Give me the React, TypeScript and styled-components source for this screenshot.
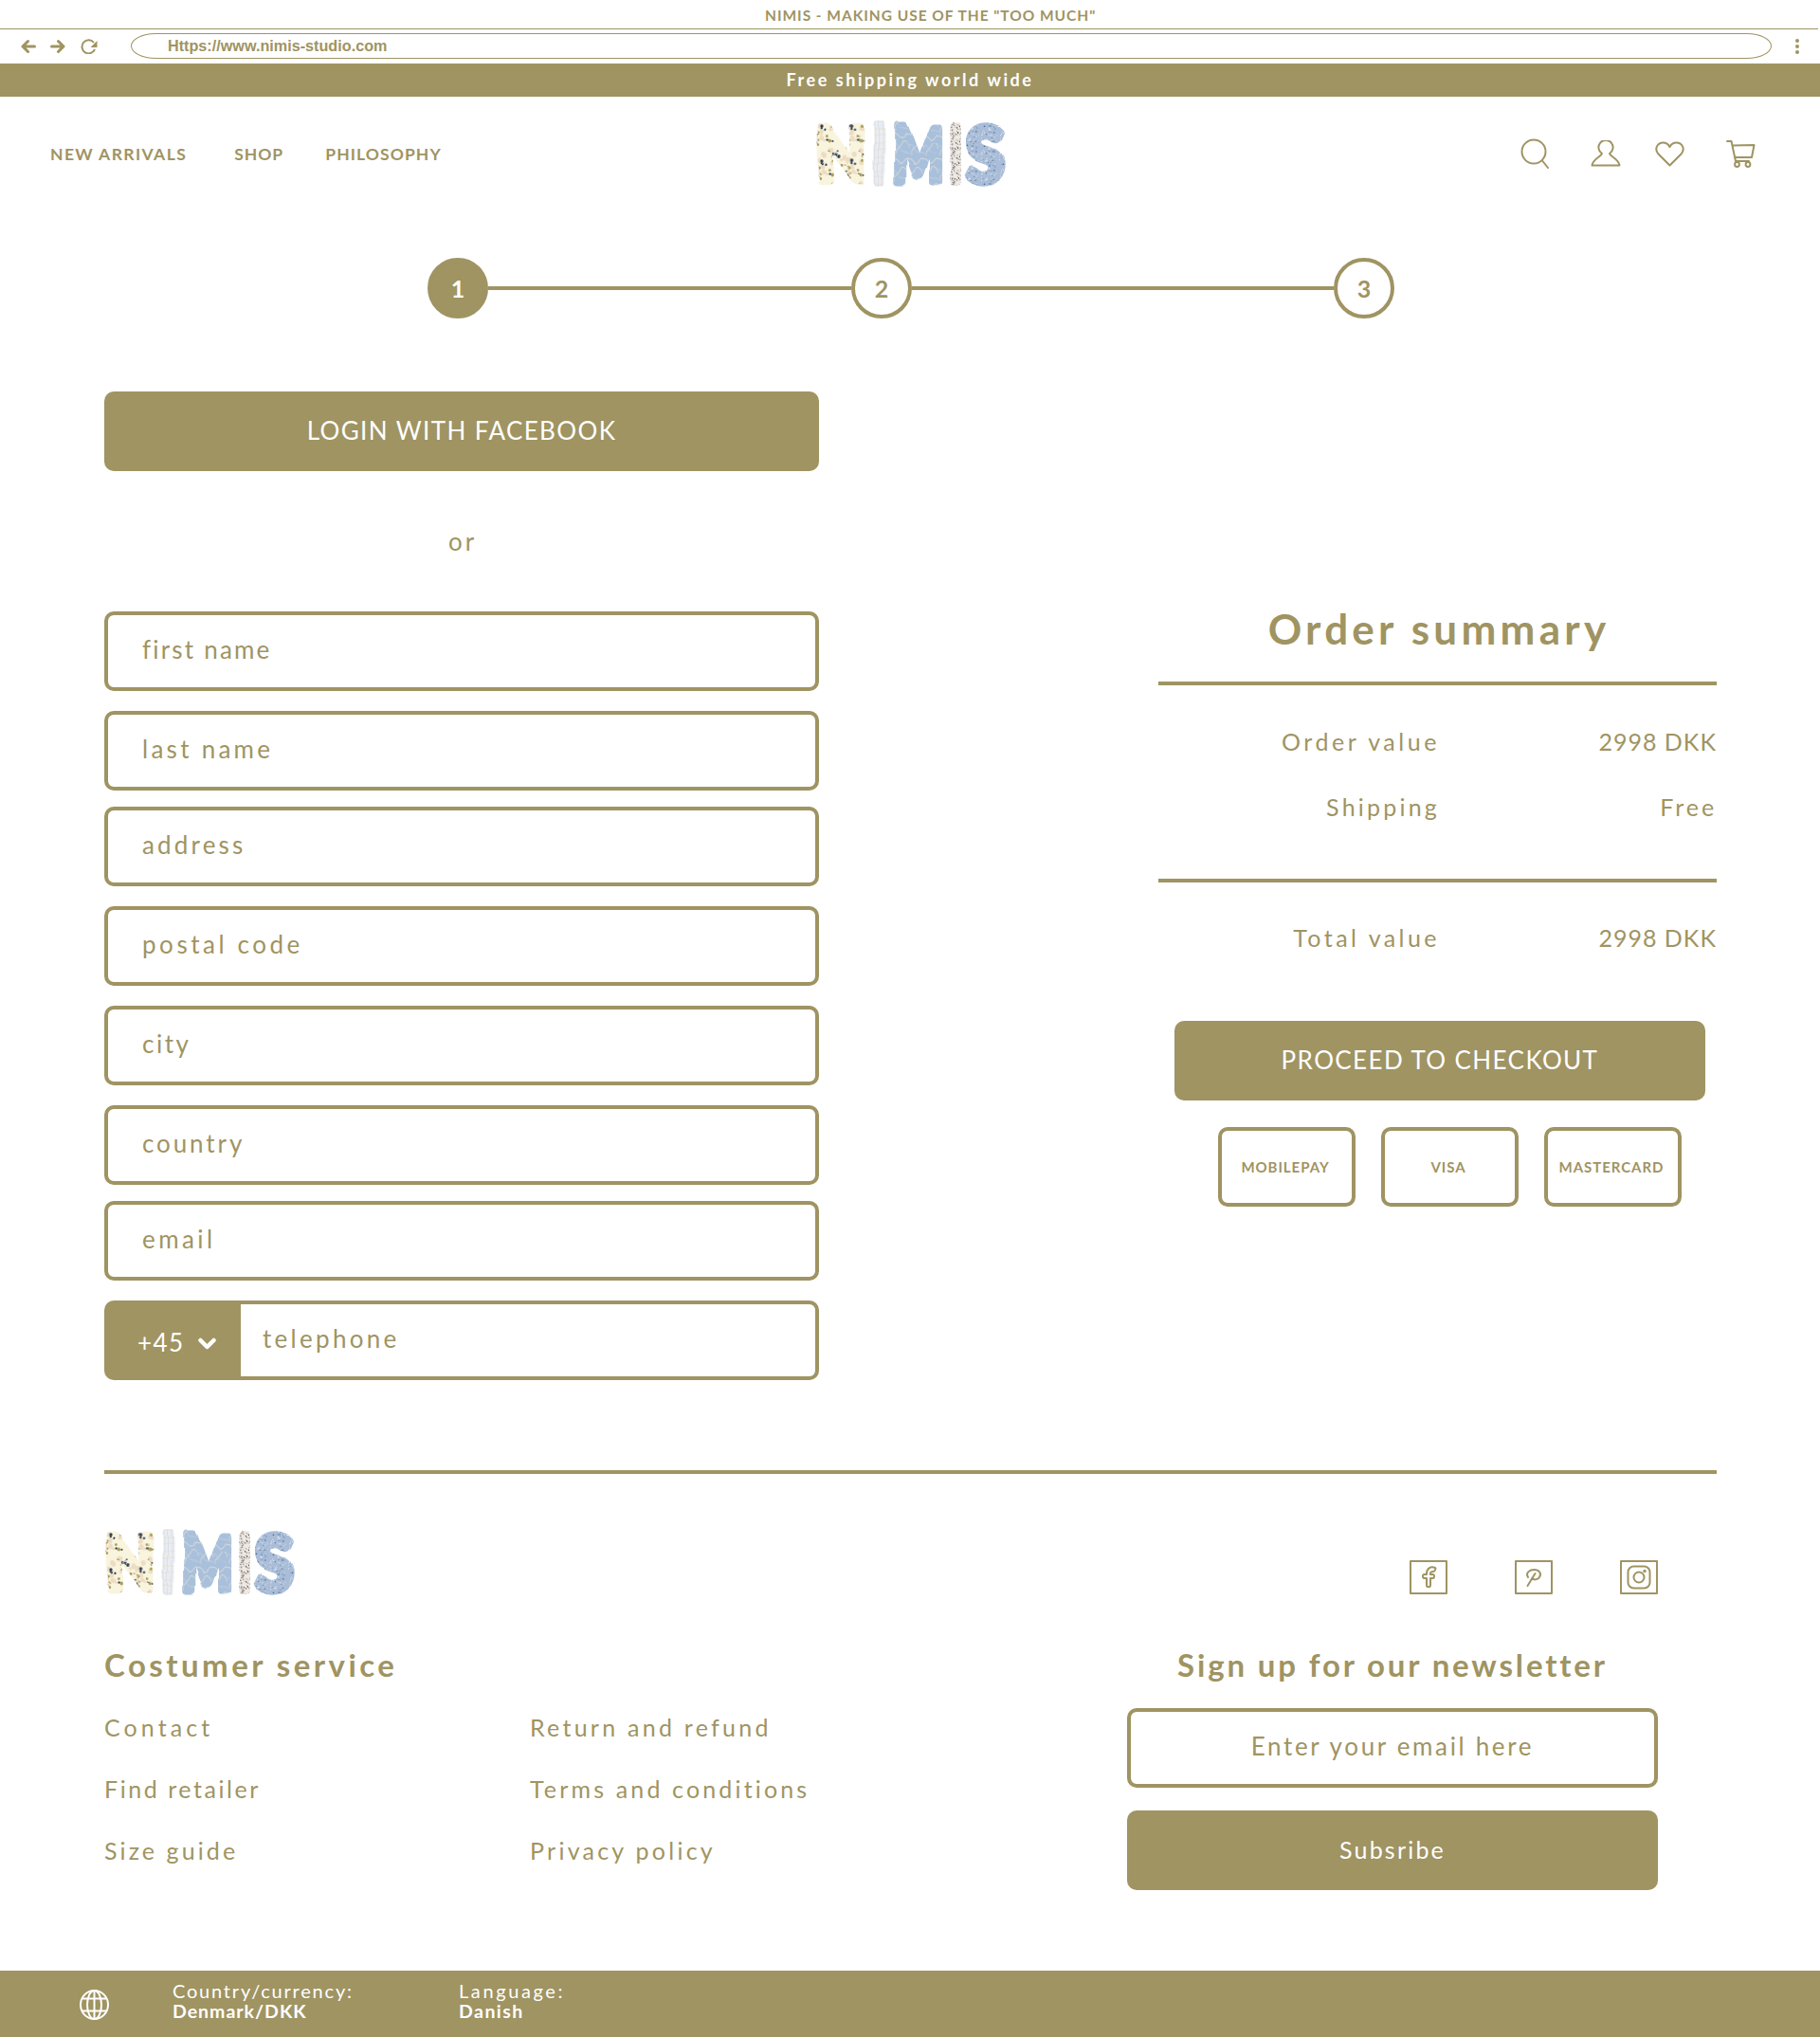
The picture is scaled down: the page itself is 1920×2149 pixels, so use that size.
import React from "react";
import styled, { createGlobalStyle } from "styled-components";

const GOLD = "#9f9462";
const FONT = `"Lato", "Open Sans", sans-serif`;

const Global = createGlobalStyle`
  html, body { margin: 0; padding: 0; background: #fff; }
  body { font-family: ${FONT}; color: ${GOLD}; }
  * { box-sizing: border-box; }
`;

const Page = styled.div`
  width: 1920px;
  height: 2149px;
  overflow: hidden;
  display: flex;
  flex-direction: column;
`;

/* browser chrome */
const TitleBar = styled.div`
  height: 31px;
  margin-right: 2px;
  border-bottom: 1px solid ${GOLD};
  display: flex;
  align-items: center;
  padding: 2px 0 0 807px;
  font-size: 15.5px;
  font-weight: 700;
  letter-spacing: 0.97px;
  white-space: nowrap;
`;
const UrlRow = styled.div`
  height: 36px;
  display: flex;
  align-items: center;
  padding: 0 0 1px 22px;
`;
const BrowserIcon = styled.svg<{ $ml?: number }>`
  display: block;
  margin-left: ${(p) => p.$ml ?? 0}px;
  flex: none;
`;
const UrlPill = styled.div`
  width: 1731px;
  height: 27px;
  margin-left: 35px;
  border: 1px solid ${GOLD};
  border-radius: 26px / 13.5px;
  display: flex;
  align-items: center;
  padding-left: 38px;
  font-size: 16.2px;
  font-weight: 700;
  font-family: "Liberation Sans", sans-serif;
`;
const Dots = styled.div`
  margin-left: 25px;
  display: flex;
  flex-direction: column;
  gap: 2px;
`;
const Dot = styled.span`
  width: 4px;
  height: 4px;
  border-radius: 50%;
  background: ${GOLD};
`;

const Promo = styled.div`
  height: 35px;
  background: ${GOLD};
  color: #fff;
  display: flex;
  align-items: center;
  justify-content: center;
  padding-bottom: 2px;
  font-size: 18px;
  font-weight: 700;
  letter-spacing: 2.55px;
`;

/* header */
const Header = styled.header`
  height: 120px;
  display: grid;
  grid-template-columns: 807px 201px 1fr;
  align-items: center;
  padding: 0 68px 0 53px;
`;
const Nav = styled.nav`
  display: flex;
  align-items: center;
`;
const NavLink = styled.a<{ $mr: number; $ls: number }>`
  font-size: 17.5px;
  font-weight: 700;
  letter-spacing: ${(p) => p.$ls}px;
  margin-right: ${(p) => p.$mr}px;
  white-space: nowrap;
`;
const HeaderIcons = styled.div`
  display: flex;
  align-items: center;
  justify-content: flex-end;
`;
const HeaderIcon = styled.svg<{ $ml?: number }>`
  display: block;
  margin-left: ${(p) => p.$ml ?? 0}px;
  fill: none;
  stroke: ${GOLD};
  stroke-width: 2;
  stroke-linecap: round;
  stroke-linejoin: round;
`;
const LogoSvg = styled.svg`
  display: block;
  width: 201px;
  height: 67px;
  overflow: visible;
`;
const LogoLetter = styled.text`
  font-family: "Lato", sans-serif;
  font-weight: 700;
  font-size: 78px;
  stroke-width: 8;
  stroke-linejoin: round;
  paint-order: stroke;
  vector-effect: non-scaling-stroke;
`;

/* stepper */
const Stepper = styled.div`
  display: flex;
  align-items: center;
  margin: 50px 0 0 451px;
  height: 64px;
`;
const StepCircle = styled.div<{ $active?: boolean }>`
  width: 64px;
  height: 64px;
  flex: none;
  border-radius: 50%;
  border: 4px solid ${GOLD};
  background: ${(p) => (p.$active ? GOLD : "#fff")};
  color: ${(p) => (p.$active ? "#fff" : GOLD)};
  display: flex;
  align-items: center;
  justify-content: center;
  font-size: 25px;
  font-weight: 700;
`;
const StepLine = styled.div<{ $w: number }>`
  width: ${(p) => p.$w}px;
  height: 4px;
  margin-top: -1px;
  background: ${GOLD};
`;

/* main */
const Main = styled.main`
  display: grid;
  grid-template-columns: 754px 589px;
  column-gap: 358px;
  margin: 77px 0 0 110px;
`;
const FormColumn = styled.div`
  display: flex;
  flex-direction: column;
`;
const SolidButton = styled.button<{ $w?: number; $ls?: number; $size?: number }>`
  width: ${(p) => (p.$w ? `${p.$w}px` : "100%")};
  height: 84px;
  flex: none;
  border: 0;
  border-radius: 10px;
  background: ${GOLD};
  color: #fff;
  font-family: ${FONT};
  font-size: ${(p) => p.$size ?? 26}px;
  letter-spacing: ${(p) => p.$ls ?? 1.4}px;
  padding: 0 0 2px;
`;
const OrText = styled.div`
  height: 40px;
  margin: 54px 0 54px;
  padding-left: 2px;
  text-align: center;
  line-height: 40px;
  font-size: 26px;
  letter-spacing: 2.8px;
`;
const Field = styled.input<{ $mt?: number; $center?: boolean; $ls: number }>`
  display: block;
  width: 100%;
  height: 84px;
  margin-top: ${(p) => p.$mt ?? 0}px;
  border: 4px solid ${GOLD};
  border-radius: 10px;
  background: #fff;
  padding: 0 0 4px ${(p) => (p.$center ? 0 : 36)}px;
  text-align: ${(p) => (p.$center ? "center" : "left")};
  font-family: ${FONT};
  font-size: 26px;
  letter-spacing: ${(p) => p.$ls}px;
  color: ${GOLD};
  outline: none;
  &::placeholder {
    color: ${GOLD};
    opacity: 1;
  }
`;
const PhoneRow = styled.div`
  display: flex;
  height: 84px;
  margin-top: 21px;
`;
const PhonePrefix = styled.div`
  width: 144px;
  flex: none;
  background: ${GOLD};
  color: #fff;
  border-radius: 10px 0 0 10px;
  display: flex;
  align-items: center;
  padding: 3px 0 0 35px;
  font-size: 26px;
  letter-spacing: 1.4px;
`;
const Chevron = styled.svg`
  display: block;
  margin: 4px 0 0 15px;
  fill: none;
  stroke: #fff;
  stroke-width: 4.5;
  stroke-linecap: round;
  stroke-linejoin: round;
`;
const PhoneInput = styled.input`
  flex: 1;
  min-width: 0;
  border: 4px solid ${GOLD};
  border-left: 0;
  border-radius: 0 10px 10px 0;
  padding: 0 0 5px 23px;
  font-family: ${FONT};
  font-size: 26px;
  letter-spacing: 3.3px;
  outline: none;
  &::placeholder {
    color: ${GOLD};
    opacity: 1;
  }
`;

/* summary */
const Summary = styled.aside`
  display: flex;
  flex-direction: column;
  padding-top: 220px;
`;
const SummaryTitle = styled.h2`
  margin: 0;
  height: 60px;
  line-height: 60px;
  padding-left: 3px;
  text-align: center;
  font-size: 44px;
  font-weight: 700;
  letter-spacing: 4.25px;
`;
const Rule = styled.div<{ $mt: number }>`
  height: 4px;
  margin-top: ${(p) => p.$mt}px;
  background: ${GOLD};
`;
const SummaryRow = styled.div<{ $mt: number }>`
  display: grid;
  grid-template-columns: 297px 1fr;
  height: 50px;
  margin-top: ${(p) => p.$mt}px;
  align-items: center;
  text-align: right;
  font-size: 25px;
`;
const RowText = styled.span<{ $ls: number }>`
  letter-spacing: ${(p) => p.$ls}px;
`;
const CheckoutWrap = styled.div`
  margin: 63px 0 0 17px;
`;
const PayRow = styled.div`
  display: flex;
  gap: 27px;
  margin: 28px 0 0 63px;
`;
const PayBadge = styled.div`
  width: 145px;
  height: 84px;
  border: 4px solid ${GOLD};
  border-radius: 10px;
  display: flex;
  align-items: center;
  justify-content: center;
  padding-right: 3px;
  font-size: 15px;
  font-weight: 700;
  letter-spacing: 0.95px;
`;

/* footer */
const FooterRule = styled.div`
  height: 4px;
  margin: 95px 109px 0 110px;
  background: ${GOLD};
`;
const FooterTop = styled.div`
  display: flex;
  justify-content: space-between;
  align-items: flex-end;
  margin: 60px 171px 0 110px;
`;
const Socials = styled.div`
  display: flex;
  gap: 71px;
`;
const SocialIcon = styled.svg`
  display: block;
  fill: none;
  stroke: ${GOLD};
  stroke-width: 2;
  stroke-linecap: round;
  stroke-linejoin: round;
`;
const FooterBody = styled.div`
  display: flex;
  justify-content: space-between;
  margin: 54px 171px 0 110px;
`;
const FooterHeading = styled.h3<{ $center?: boolean; $ls: number }>`
  margin: 0;
  height: 40px;
  line-height: 40px;
  font-size: 33px;
  font-weight: 700;
  letter-spacing: ${(p) => p.$ls}px;
  text-align: ${(p) => (p.$center ? "center" : "left")};
`;
const LinkGrid = styled.div`
  display: grid;
  grid-template-columns: 449px auto;
  grid-auto-rows: 40px;
  row-gap: 25px;
  margin-top: 26px;
  align-items: center;
`;
const FooterLink = styled.a<{ $ls: number }>`
  font-size: 25px;
  letter-spacing: ${(p) => p.$ls}px;
  white-space: nowrap;
`;
const Newsletter = styled.div`
  width: 560px;
  display: flex;
  flex-direction: column;
`;
const NewsletterField = styled.div`
  margin-top: 26px;
`;
const SubscribeWrap = styled.div`
  margin-top: 24px;
`;
const BottomBar = styled.footer`
  height: 70px;
  margin-top: 85px;
  background: ${GOLD};
  color: #fff;
  display: flex;
  align-items: center;
  padding-left: 84px;
`;
const Globe = styled.svg`
  display: block;
  margin: 2px 67px 0 0;
  fill: none;
  stroke: #fff;
  stroke-width: 2;
`;
const BarBlock = styled.div<{ $w: number }>`
  width: ${(p) => p.$w}px;
  display: flex;
  flex-direction: column;
  font-size: 20px;
  line-height: 22px;
  margin-top: -6px;
`;
const BarLabel = styled.span<{ $ls: number }>`
  letter-spacing: ${(p) => p.$ls}px;
`;
const BarValue = styled.strong<{ $ls: number }>`
  font-weight: 700;
  font-size: 19.5px;
  margin-top: 0;
  letter-spacing: ${(p) => p.$ls}px;
`;

/* seeded dots for the fabric patterns of the logo */
function dots(seed: number, n: number, size: number, rMin: number, rMax: number) {
  let s = seed;
  const rnd = () => {
    s = (s * 16807) % 2147483647;
    return (s - 1) / 2147483646;
  };
  return Array.from({ length: n }, () => ({
    cx: rnd() * size,
    cy: rnd() * size,
    r: rMin + rnd() * (rMax - rMin),
  }));
}

const LETTERS = [
  { ch: "N", x: 2, sx: 0.85, pat: "f" },
  { ch: "I", x: 60.5, sx: 0.6, pat: "p" },
  { ch: "M", x: 82, sx: 0.71, pat: "m" },
  { ch: "I", x: 141.5, sx: 0.6, pat: "g" },
  { ch: "S", x: 161, sx: 0.9, pat: "s" },
];

const Logo = ({ id }: { id: string }) => (
  <LogoSvg viewBox="0 0 201 67" aria-label="NIMIS">
    <defs>
      <filter id={`${id}w`} x="-10%" y="-20%" width="120%" height="140%" colorInterpolationFilters="sRGB">
        <feTurbulence type="fractalNoise" baseFrequency="0.02" numOctaves="1" seed="4" />
        <feDisplacementMap in="SourceGraphic" scale="10" xChannelSelector="R" yChannelSelector="G" />
      </filter>
      <pattern id={`${id}f`} width="36" height="36" patternUnits="userSpaceOnUse">
        <rect width="36" height="36" fill="#f8f4de" />
        {dots(11, 14, 36, 1.5, 3.5).map((d, i) => (
          <circle key={i} {...d} fill="#eedcc2" />
        ))}
        {dots(23, 14, 36, 0.9, 2).map((d, i) => (
          <circle key={i} {...d} fill="#a99c58" />
        ))}
        {dots(37, 11, 36, 0.8, 2).map((d, i) => (
          <circle key={i} {...d} fill="#2c3d50" />
        ))}
      </pattern>
      <pattern id={`${id}p`} width="14" height="14" patternUnits="userSpaceOnUse">
        <rect width="14" height="14" fill="#e9edf3" />
        <path d="M0 3H14M0 9H14" stroke="#f0dcc6" strokeWidth="1" />
        <path d="M4 0V14M10 0V14" stroke="#d6dbe3" strokeWidth="1.2" />
      </pattern>
      <pattern id={`${id}m`} width="22" height="26" patternUnits="userSpaceOnUse">
        <rect width="22" height="26" fill="#a8c0db" />
        <path d="M0 4C5 0 8 12 14 7S18 2 22 4M3 26C1 18 9 19 11 14S20 12 22 18" stroke="#cfd5da" strokeWidth="1.3" fill="none" />
        <path d="M0 15C4 12 6 20 10 22S18 22 22 24" stroke="#c4d0dc" strokeWidth="1" fill="none" />
      </pattern>
      <pattern id={`${id}g`} width="16" height="16" patternUnits="userSpaceOnUse">
        <rect width="16" height="16" fill="#efe9e4" />
        {dots(53, 30, 16, 0.5, 1).map((d, i) => (
          <circle key={i} {...d} fill="#5c5450" />
        ))}
      </pattern>
      <pattern id={`${id}s`} width="20" height="20" patternUnits="userSpaceOnUse">
        <rect width="20" height="20" fill="#a9bdd8" />
        {dots(71, 22, 20, 0.4, 0.9).map((d, i) => (
          <circle key={i} {...d} fill="#e4e8ee" />
        ))}
        {dots(97, 14, 20, 0.4, 0.9).map((d, i) => (
          <circle key={i} {...d} fill="#3f6594" />
        ))}
      </pattern>
    </defs>
    <g filter={`url(#${id}w)`}>
      {LETTERS.map((l, i) => (
        <LogoLetter
          key={i}
          transform={`translate(${l.x} 62) scale(${l.sx} 1)`}
          fill={`url(#${id}${l.pat})`}
          stroke={`url(#${id}${l.pat})`}
        >
          {l.ch}
        </LogoLetter>
      ))}
    </g>
  </LogoSvg>
);

const FIELDS: { text: string; mt: number; ls: number }[] = [
  { text: "first name", mt: 0, ls: 2.2 },
  { text: "last name", mt: 21, ls: 3.27 },
  { text: "address", mt: 17, ls: 3.17 },
  { text: "postal code", mt: 21, ls: 3.55 },
  { text: "city", mt: 21, ls: 2.5 },
  { text: "country", mt: 21, ls: 2.9 },
  { text: "email", mt: 17, ls: 3.4 },
];

export default function App() {
  return (
    <Page>
      <Global />
      <TitleBar>NIMIS - MAKING USE OF THE "TOO MUCH"</TitleBar>
      <UrlRow>
        <BrowserIcon width="16" height="16" viewBox="0 0 16 16" fill="none" stroke={GOLD} strokeWidth="3" strokeLinecap="round" strokeLinejoin="round">
          <path d="M14.5 8H2M7.5 2.500 2 8l5.500 5.500" />
        </BrowserIcon>
        <BrowserIcon $ml={15} width="16" height="16" viewBox="0 0 16 16" fill="none" stroke={GOLD} strokeWidth="3" strokeLinecap="round" strokeLinejoin="round">
          <path d="M1.500 8H14M8.500 2.500 14 8l-5.500 5.500" />
        </BrowserIcon>
        <BrowserIcon $ml={16} width="18" height="16" viewBox="0 0 18 16" fill="none" stroke={GOLD} strokeWidth="2">
          <path d="M15 11a7 7 0 1 1-1-7" />
          <path d="M17.500 2v7h-7z" fill={GOLD} stroke="none" />
        </BrowserIcon>
        <UrlPill>Https://www.nimis-studio.com</UrlPill>
        <Dots>
          <Dot />
          <Dot />
          <Dot />
        </Dots>
      </UrlRow>
      <Promo>Free shipping world wide</Promo>

      <Header>
        <Nav>
          <NavLink $mr={50} $ls={1.4}>NEW ARRIVALS</NavLink>
          <NavLink $mr={44} $ls={1}>SHOP</NavLink>
          <NavLink $mr={0} $ls={1.1}>PHILOSOPHY</NavLink>
        </Nav>
        <Logo id="top" />
        <HeaderIcons>
          <HeaderIcon width="30" height="32" viewBox="0 0 30 32">
            <circle cx="14" cy="14" r="12.500" />
            <path d="M23 23.500 29 31" />
          </HeaderIcon>
          <HeaderIcon $ml={44} width="32" height="28" viewBox="0 0 32 28">
            <path d="M12 14a7.600 7.600 0 1 1 8 0c1 3.600 9 5 10.500 12.500H1.500C3 19 11 17.600 12 14z" />
          </HeaderIcon>
          <HeaderIcon $ml={36} width="31" height="27" viewBox="0 0 31 27">
            <path d="M15.500 25.500 3.500 13.500C-1 8.500 2 1.500 8.500 1.500c3.300 0 5.600 1.800 7 4.500 1.400-2.700 3.700-4.500 7-4.500 6.500 0 9.500 7 5 12z" />
          </HeaderIcon>
          <HeaderIcon $ml={44} width="31" height="29" viewBox="0 0 31 29">
            <path d="M1 1h4.500l4.500 21h14M6.500 5.500 29.500 5 27 18H8.800" />
            <circle cx="11.500" cy="25.500" r="2.400" />
            <circle cx="23" cy="25.500" r="2.400" />
          </HeaderIcon>
        </HeaderIcons>
      </Header>

      <Stepper>
        <StepCircle $active>1</StepCircle>
        <StepLine $w={383} />
        <StepCircle>2</StepCircle>
        <StepLine $w={445} />
        <StepCircle>3</StepCircle>
      </Stepper>

      <Main>
        <FormColumn>
          <SolidButton>LOGIN WITH FACEBOOK</SolidButton>
          <OrText>or</OrText>
          {FIELDS.map((f) => (
            <Field key={f.text} $mt={f.mt} $ls={f.ls} placeholder={f.text} />
          ))}
          <PhoneRow>
            <PhonePrefix>
              +45
              <Chevron width="19" height="13" viewBox="0 0 19 13">
                <path d="M2.500 3 9.500 10l7-7" />
              </Chevron>
            </PhonePrefix>
            <PhoneInput placeholder="telephone" />
          </PhoneRow>
        </FormColumn>

        <Summary>
          <SummaryTitle>Order summary</SummaryTitle>
          <Rule $mt={26} />
          <SummaryRow $mt={34}>
            <RowText $ls={3.55}>Order value</RowText>
            <RowText $ls={1}>2998 DKK</RowText>
          </SummaryRow>
          <SummaryRow $mt={19}>
            <RowText $ls={3.2}>Shipping</RowText>
            <RowText $ls={2.9}>Free</RowText>
          </SummaryRow>
          <Rule $mt={51} />
          <SummaryRow $mt={33}>
            <RowText $ls={3.45}>Total value</RowText>
            <RowText $ls={1}>2998 DKK</RowText>
          </SummaryRow>
          <CheckoutWrap>
            <SolidButton $w={560}>PROCEED TO CHECKOUT</SolidButton>
          </CheckoutWrap>
          <PayRow>
            <PayBadge>MOBILEPAY</PayBadge>
            <PayBadge>VISA</PayBadge>
            <PayBadge>MASTERCARD</PayBadge>
          </PayRow>
        </Summary>
      </Main>

      <FooterRule />
      <FooterTop>
        <Logo id="foot" />
        <Socials>
          <SocialIcon width="40" height="36" viewBox="0 0 40 36">
            <rect x="1" y="1" width="38" height="34" />
            <path d="M27 8c-5-2-9 1-9 6v1h-2.500c-2 0-2 4 0 4H18v7c0 3 4 3 4 0v-7h2.500c2 0 2-4 0-4H22v-1c0-2 1-2 3-2 2 0 3-3.500 2-4z" />
          </SocialIcon>
          <SocialIcon width="40" height="36" viewBox="0 0 40 36">
            <rect x="1" y="1" width="38" height="34" />
            <path d="M14 18c-3-5 2-8 6.500-8 5.500 0 8 4 5.500 8-2 3-6 3-8 1M21.500 14 13.500 27" />
          </SocialIcon>
          <SocialIcon width="40" height="36" viewBox="0 0 40 36">
            <rect x="1" y="1" width="38" height="34" />
            <rect x="8.500" y="6.500" width="23" height="23" rx="6" />
            <circle cx="20" cy="18" r="5.500" />
            <circle cx="26" cy="11.500" r="0.800" />
          </SocialIcon>
        </Socials>
      </FooterTop>
      <FooterBody>
        <div>
          <FooterHeading $ls={3.45}>Costumer service</FooterHeading>
          <LinkGrid>
            <FooterLink $ls={4.1}>Contact</FooterLink>
            <FooterLink $ls={3.25}>Return and refund</FooterLink>
            <FooterLink $ls={2.55}>Find retailer</FooterLink>
            <FooterLink $ls={3.15}>Terms and conditions</FooterLink>
            <FooterLink $ls={3.1}>Size guide</FooterLink>
            <FooterLink $ls={3.25}>Privacy policy</FooterLink>
          </LinkGrid>
        </div>
        <Newsletter>
          <FooterHeading $center $ls={2.85}>Sign up for our newsletter</FooterHeading>
          <NewsletterField>
            <Field $center $ls={2.65} placeholder="Enter your email here" />
          </NewsletterField>
          <SubscribeWrap>
            <SolidButton $size={25} $ls={2.2}>Subsribe</SolidButton>
          </SubscribeWrap>
        </Newsletter>
      </FooterBody>
      <BottomBar>
        <Globe width="31" height="32" viewBox="0 0 31 32">
          <ellipse cx="15.500" cy="16" rx="14.500" ry="15" />
          <ellipse cx="15.500" cy="16" rx="7.500" ry="15" />
          <path d="M15.500 1V31M3 9.500H28M3 22.500H28" />
        </Globe>
        <BarBlock $w={302}>
          <BarLabel $ls={1.8}>Country/currency:</BarLabel>
          <BarValue $ls={1}>Denmark/DKK</BarValue>
        </BarBlock>
        <BarBlock $w={200}>
          <BarLabel $ls={2.6}>Language:</BarLabel>
          <BarValue $ls={1.45}>Danish</BarValue>
        </BarBlock>
      </BottomBar>
    </Page>
  );
}
